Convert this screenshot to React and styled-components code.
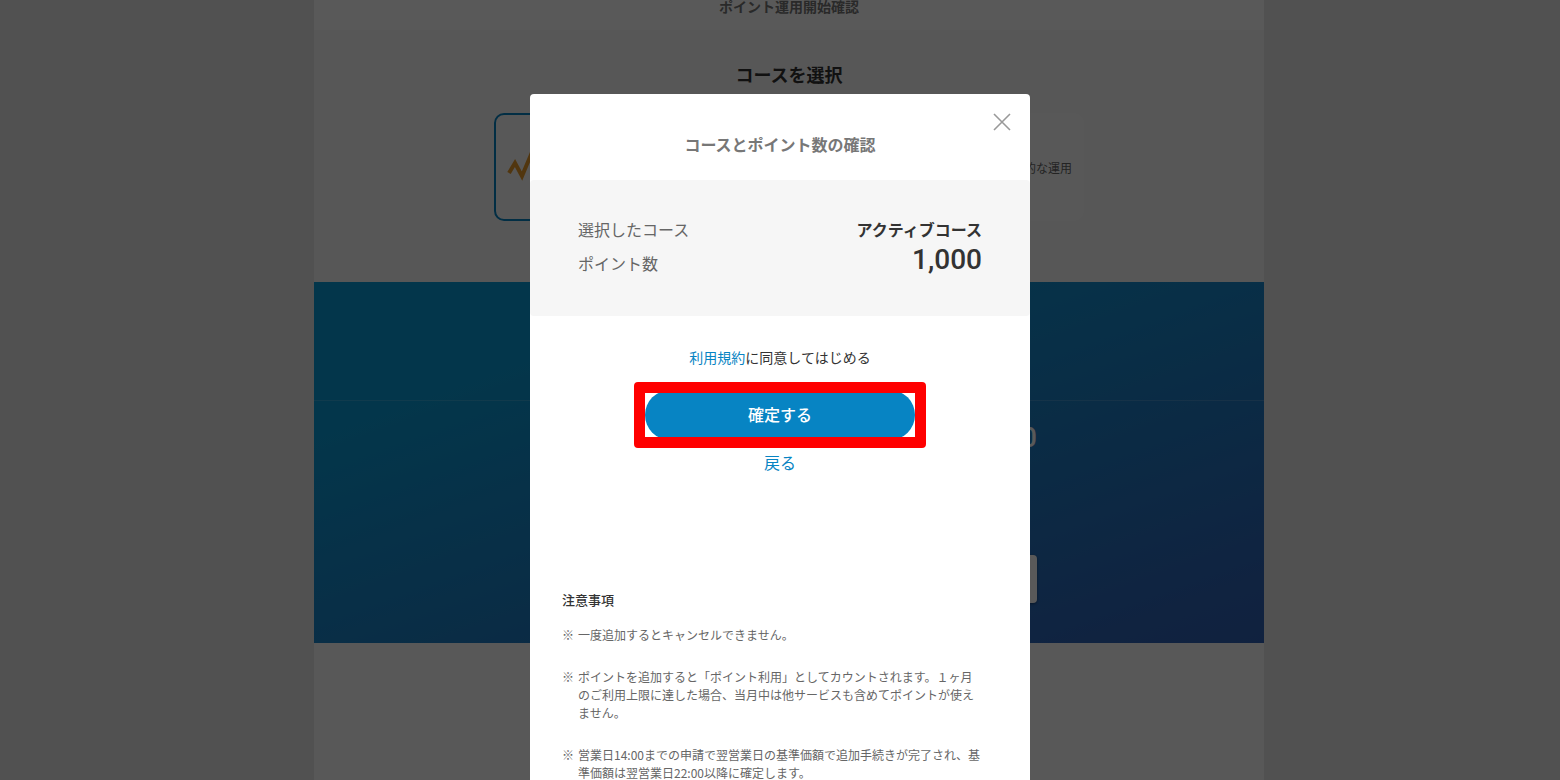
import styled, { createGlobalStyle } from "styled-components";

const GlobalStyle = createGlobalStyle`
* {
    box-sizing: border-box;
}
body {
    margin: 0;
    background: #e8e8e8;
    color: #333;
    font-family: "Noto Sans CJK JP", sans-serif;
    overflow: hidden;
}
h1, h2, h3, p, dl, dd, ul {
    margin: 0;
    padding: 0;
}
a {
    color: #0784c3;
    text-decoration: none;
}
`;

const Page = styled.div`
display: flex;
justify-content: center;
min-height: 100vh;
padding-left: 18px;
`;

const Content = styled.main`
width: 100%;
max-width: 950px;
background: #fdfdfd;
`;

const PageTitle = styled.h1`
padding-bottom: 18px;
font-size: 14px;
line-height: 12px;
color: #777;
text-align: center;
background: #fff;
`;

const CourseSection = styled.section`
padding: 32px 24px 61px;
background: #f9f9f9;
`;

const SectionTitle = styled.h2`
margin-bottom: 27px;
font-size: 18px;
line-height: 24px;
text-align: center;
`;

const CourseList = styled.div`
display: flex;
gap: 12px;
max-width: 590px;
margin: 0 auto;
`;

const CourseCard = styled.button`
display: flex;
flex: 1;
align-items: center;
justify-content: ${({ $selected }) => ($selected ? "flex-start" : "flex-end")};
height: 108px;
padding: 0 10px;
border: 2px solid ${({ $selected }) => ($selected ? "#0784c3" : "#fcfcfc")};
border-radius: 10px;
background: #fcfcfc;
color: #666;
font-family: inherit;
font-size: 12px;
`;

const AmountSection = styled.section`
display: flex;
flex-direction: column;
background: linear-gradient(160deg, #0b9bd6 0%, #0b9bd6 22%, #2e65b8 90%, #2e60b5 100%);
`;

const AmountHead = styled.div`
height: 119px;
border-bottom: 1px solid rgba(255, 255, 255, 0.15);
`;

const AmountBody = styled.div`
display: flex;
flex-direction: column;
gap: 101px;
width: 100%;
max-width: 496px;
margin: 0 auto;
padding: 20px 0 40px;
`;

const Amount = styled.p`
font-family: Roboto, sans-serif;
font-size: 28px;
font-weight: 500;
line-height: 33px;
text-align: right;
color: #fff;
`;

const AmountButton = styled.button`
height: 48px;
border: 0;
border-radius: 4px;
background: #fff;
box-shadow: 0 1px 3px rgba(0, 0, 0, 0.4);
`;

const Overlay = styled.div`
position: fixed;
inset: 0;
padding-top: 94px;
overflow-y: auto;
scrollbar-width: none;
background: rgba(0, 0, 0, 0.65);
`;

const Modal = styled.div`
position: relative;
width: 100%;
max-width: 500px;
margin: 0 auto;
border-radius: 4px;
background: #fff;
`;

const ModalTitle = styled.h2`
padding: 38px 0 24px;
font-size: 16px;
line-height: 24px;
text-align: center;
color: #777;
`;

const CloseButton = styled.button`
position: absolute;
top: 16px;
right: 16px;
display: flex;
padding: 0;
border: 0;
background: none;
color: #999;
`;

const Summary = styled.dl`
padding: 37px 48px 34px;
border-radius: 4px;
background: #f6f6f6;
`;

const SummaryRow = styled.div`
display: flex;
justify-content: space-between;
font-size: 16px;
& + & {
    margin-top: 3px;
}
dt {
    line-height: 24px;
    color: #666;
}
dd {
    line-height: 24px;
    font-weight: bold;
}
`;

const PointRow = styled(SummaryRow)`
align-items: center;
height: 38px;
dd {
    padding-bottom: 6px;
    font-family: Roboto, sans-serif;
    font-size: 28px;
    font-weight: 500;
    line-height: 32px;
}
`;

const Actions = styled.div`
display: flex;
flex-direction: column;
align-items: center;
padding-top: 30px;
`;

const Terms = styled.p`
font-size: 14px;
line-height: 22px;
`;

const Highlight = styled.div`
position: relative;
width: 270px;
margin-top: 22px;
&::after {
    content: "";
    position: absolute;
    inset: -8px -11px;
    border: 11px solid #f00;
    border-radius: 4px;
    pointer-events: none;
}
`;

const ConfirmButton = styled.button`
display: block;
width: 100%;
height: 50px;
padding: 0 0 2px;
border: 0;
border-radius: 25px;
background: #0784c3;
color: #fff;
font-family: inherit;
font-size: 16px;
font-weight: 500;
`;

const BackLink = styled.a`
margin-top: 10px;
font-size: 16px;
line-height: 24px;
`;

const Notes = styled.section`
padding: 116px 48px 40px 32px;
`;

const NotesTitle = styled.h3`
margin-bottom: 16px;
font-size: 13px;
font-weight: 500;
line-height: 20px;
`;

const NoteList = styled.ul`
display: flex;
flex-direction: column;
gap: 24px;
list-style: none;
`;

const Note = styled.li`
display: flex;
gap: 4px;
font-size: 12px;
line-height: 18px;
color: #666;
&::before {
    content: "※";
}
`;

const notes = [
    "一度追加するとキャンセルできません。",
    "ポイントを追加すると「ポイント利用」としてカウントされます。１ヶ月のご利用上限に達した場合、当月中は他サービスも含めてポイントが使えません。",
    "営業日14:00までの申請で翌営業日の基準価額で追加手続きが完了され、基準価額は翌営業日22:00以降に確定します。",
];

const ChartIcon = () => (
    <svg width="40" height="36" viewBox="0 0 40 36" fill="none" stroke="#e89b2d" strokeWidth="4" aria-hidden="true">
        <path d="M3 24 L9 14 L16 27 L24 8 L30 22 L37 10" />
    </svg>
);

const CloseIcon = () => (
    <svg width="24" height="24" viewBox="0 0 24 24" fill="none" stroke="currentColor" strokeWidth="1.6" aria-hidden="true">
        <path d="M4 4 L20 20 M20 4 L4 20" />
    </svg>
);

const ConfirmModal = () => (
    <Overlay>
        <Modal role="dialog" aria-labelledby="confirm-title">
            <ModalTitle id="confirm-title">コースとポイント数の確認</ModalTitle>
            <CloseButton type="button" aria-label="閉じる">
                <CloseIcon />
            </CloseButton>
            <Summary>
                <SummaryRow>
                    <dt>選択したコース</dt>
                    <dd>アクティブコース</dd>
                </SummaryRow>
                <PointRow>
                    <dt>ポイント数</dt>
                    <dd>1,000</dd>
                </PointRow>
            </Summary>
            <Actions>
                <Terms>
                    <a href="#terms">利用規約</a>に同意してはじめる
                </Terms>
                <Highlight>
                    <ConfirmButton type="button">確定する</ConfirmButton>
                </Highlight>
                <BackLink href="#back">戻る</BackLink>
            </Actions>
            <Notes>
                <NotesTitle>注意事項</NotesTitle>
                <NoteList>
                    {notes.map((note) => (
                        <Note key={note}>
                            <p>{note}</p>
                        </Note>
                    ))}
                </NoteList>
            </Notes>
        </Modal>
    </Overlay>
);

export default function App() {
    return (
        <>
            <GlobalStyle />
            <Page>
                <Content>
                    <PageTitle>ポイント運用開始確認</PageTitle>
                    <CourseSection>
                        <SectionTitle>コースを選択</SectionTitle>
                        <CourseList>
                            <CourseCard type="button" $selected aria-label="アクティブコース">
                                <ChartIcon />
                            </CourseCard>
                            <CourseCard type="button">的な運用</CourseCard>
                        </CourseList>
                    </CourseSection>
                    <AmountSection>
                        <AmountHead />
                        <AmountBody>
                            <Amount>0</Amount>
                            <AmountButton type="button" aria-label="追加する" />
                        </AmountBody>
                    </AmountSection>
                </Content>
            </Page>
            <ConfirmModal />
        </>
    );
}
